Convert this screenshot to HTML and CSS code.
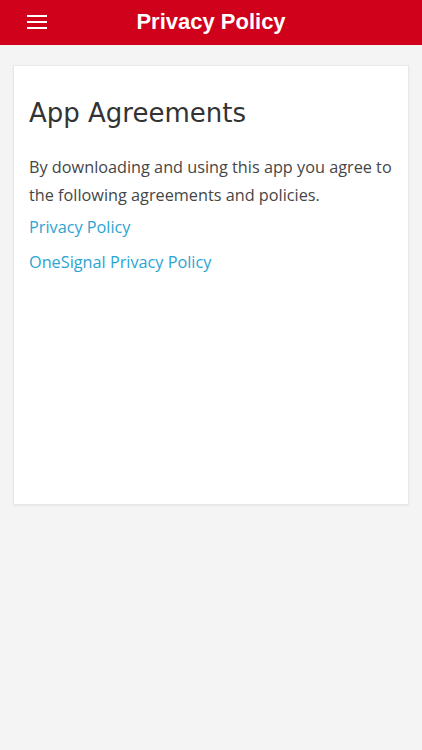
FILE: index.html
```html
<!DOCTYPE html>
<html>
<head>
<meta charset="utf-8">
<link rel="stylesheet" href="styles.css">
</head>
<body>
<header class="bar">
  <button class="menu" aria-label="menu">
    <svg width="20" height="14" viewBox="0 0 20 14"><path d="M0 1h20M0 7h20M0 13h20" stroke="#fff" stroke-width="2"/></svg>
  </button>
  <h1 class="title">Privacy Policy</h1>
</header>
<main class="page">
  <section class="card">
    <h2 class="heading">App Agreements</h2>
    <p class="text">By downloading and using this app you agree to the following agreements and policies.</p>
    <a class="link first" href="#">Privacy Policy</a>
    <a class="link" href="#">OneSignal Privacy Policy</a>
  </section>
</main>
</body>
</html>
```
FILE: styles.css
```css
html, body { margin: 0; padding: 0; }
body { background: #f4f4f4; width: 422px; height: 750px; font-family: "Open Sans", sans-serif; }
.bar { height: 45px; background: #d0011b; display: flex; align-items: center; justify-content: center; position: relative; }
.menu { position: absolute; left: 27px; top: 15px; background: none; border: 0; padding: 0; width: 20px; height: 14px; display: block; }
.menu svg { display: block; }
.title { margin: 0 0 2px; color: #fff; font-family: "Liberation Sans", Arial, sans-serif; font-weight: bold; font-size: 22px; }
.page { padding: 20px 13px; }
.card { background: #fff; border: 1px solid #e8e8e8; box-shadow: 0 1px 2px rgba(0,0,0,0.06); height: 440px; box-sizing: border-box; padding: 31px 12px 0 15px; display: flex; flex-direction: column; align-items: flex-start; }
.heading { margin: 0 0 24px; font-family: "DejaVu Sans", sans-serif; font-weight: normal; font-size: 26px; color: #333; line-height: 32px; }
.text { margin: 0; font-size: 16.25px; line-height: 28px; color: #464646; }
.link { color: #2ba4d3; text-decoration: none; font-size: 16.25px; line-height: 28px; margin-top: 7px; }
.link.first { margin-top: 4px; }
```
